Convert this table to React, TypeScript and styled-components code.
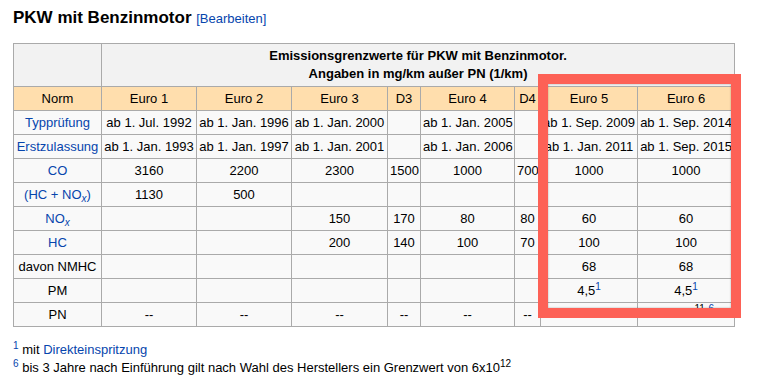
import React from 'react';
import styled, { createGlobalStyle } from 'styled-components';

const GlobalStyle = createGlobalStyle`
  html, body {
    margin: 0;
    padding: 0;
    background: #fff;
    font-family: "Liberation Sans", Arial, Helvetica, sans-serif;
    color: #000;
  }
`;

const Page = styled.div`
  position: relative;
  width: 763px;
  height: 380px;
  overflow: hidden;
  padding: 7px 0 0 13px;
  box-sizing: border-box;
`;

const Heading = styled.h2`
  margin: 0 0 14px;
  font-size: 17px;
  line-height: 21px;
  font-weight: bold;
`;

const EditLink = styled.span`
  font-size: 13px;
  font-weight: normal;
  color: #0645ad;
`;

const Table = styled.table`
  border-collapse: collapse;
  table-layout: fixed;
  width: 721px;
  font-size: 13px;
  border: 1px solid #aaa;
`;

const HeadCell = styled.th<{ $tone: 'grey' | 'peach'; $bold?: boolean }>`
  border: 1px solid #aaa;
  padding: 0 2px;
  text-align: center;
  white-space: nowrap;
  font-weight: ${(p) => (p.$bold ? 'bold' : 'normal')};
  background: ${(p) => (p.$tone === 'grey' ? '#f2f2f2' : '#ffdead')};
  line-height: 18px;
  height: 42px;
`;

const PeachCell = styled(HeadCell)`
  height: 23px;
  line-height: 16px;
`;

const Cell = styled.td<{ $link?: boolean }>`
  border: 1px solid #aaa;
  padding: 0 2px;
  height: 23px;
  line-height: 16px;
  text-align: center;
  white-space: nowrap;
  background: #f9f9f9;
  color: ${(p) => (p.$link ? '#0645ad' : '#000')};
`;

const Sub = styled.sub`
  font-size: 10px;
  font-style: italic;
  line-height: 0;
  vertical-align: -3px;
`;

const Sup = styled.sup<{ $link?: boolean }>`
  font-size: 10px;
  line-height: 0;
  vertical-align: 5px;
  color: ${(p) => (p.$link ? '#0645ad' : 'inherit')};
`;

const Raised = styled.span`
  vertical-align: 3px;
`;

const Notes = styled.div`
  margin-top: 14px;
  font-size: 13px;
  line-height: 18px;
`;

const Link = styled.span`
  color: #0645ad;
`;

const Highlight = styled.div`
  position: absolute;
  left: 538px;
  top: 74px;
  width: 203px;
  height: 244px;
  box-sizing: border-box;
  border: 10px solid #fd6156;
  box-shadow: inset 0 0 2px rgba(0, 0, 0, 0.35);
  pointer-events: none;
`;

const widths = [88, 95, 95, 96, 33, 94, 26, 97, 97];
const norms = ['Euro 1', 'Euro 2', 'Euro 3', 'D3', 'Euro 4', 'D4', 'Euro 5', 'Euro 6'];

type Row = { label: React.ReactNode; link?: boolean; values: React.ReactNode[] };

const pm = (
  <>
    4,5<Sup $link>1</Sup>
  </>
);

const rows: Row[] = [
  {
    label: 'Typprüfung',
    link: true,
    values: ['ab 1. Jul. 1992', 'ab 1. Jan. 1996', 'ab 1. Jan. 2000', '', 'ab 1. Jan. 2005', '', 'ab 1. Sep. 2009', 'ab 1. Sep. 2014'],
  },
  {
    label: 'Erstzulassung',
    link: true,
    values: ['ab 1. Jan. 1993', 'ab 1. Jan. 1997', 'ab 1. Jan. 2001', '', 'ab 1. Jan. 2006', '', 'ab 1. Jan. 2011', 'ab 1. Sep. 2015'],
  },
  { label: 'CO', link: true, values: ['3160', '2200', '2300', '1500', '1000', '700', '1000', '1000'] },
  {
    label: (
      <>
        (HC + NO<Sub>x</Sub>)
      </>
    ),
    link: true,
    values: ['1130', '500', '', '', '', '', '', ''],
  },
  {
    label: (
      <>
        NO<Sub>x</Sub>
      </>
    ),
    link: true,
    values: ['', '', '150', '170', '80', '80', '60', '60'],
  },
  { label: 'HC', link: true, values: ['', '', '200', '140', '100', '70', '100', '100'] },
  { label: 'davon NMHC', values: ['', '', '', '', '', '', '68', '68'] },
  { label: 'PM', values: ['', '', '', '', '', '', pm, pm] },
  {
    label: 'PN',
    values: [
      '--',
      '--',
      '--',
      '--',
      '--',
      '--',
      '--',
      <Raised>
        6 × 10<Sup>11</Sup> <Sup $link>6</Sup>
      </Raised>,
    ],
  },
];

const App: React.FC = () => {
  return (
    <>
      <GlobalStyle />
      <Page>
        <Heading>
          PKW mit Benzinmotor <EditLink>[Bearbeiten]</EditLink>
        </Heading>
        <Table>
          <colgroup>
            {widths.map((w, i) => (
              <col key={i} style={{ width: w }} />
            ))}
          </colgroup>
          <thead>
            <tr>
              <HeadCell $tone="grey" />
              <HeadCell $tone="grey" $bold colSpan={8}>
                Emissionsgrenzwerte für PKW mit Benzinmotor.
                <br />
                Angaben in mg/km außer PN (1/km)
              </HeadCell>
            </tr>
            <tr>
              <PeachCell $tone="peach">Norm</PeachCell>
              {norms.map((n) => (
                <PeachCell key={n} $tone="peach">
                  {n}
                </PeachCell>
              ))}
            </tr>
          </thead>
          <tbody>
            {rows.map((row, i) => (
              <tr key={i}>
                <Cell $link={row.link}>{row.label}</Cell>
                {row.values.map((v, j) => (
                  <Cell key={j}>{v}</Cell>
                ))}
              </tr>
            ))}
          </tbody>
        </Table>
        <Notes>
          <div>
            <Sup $link>1</Sup> mit <Link>Direkteinspritzung</Link>
          </div>
          <div>
            <Sup $link>6</Sup> bis 3 Jahre nach Einführung gilt nach Wahl des Herstellers ein Grenzwert von 6x10
            <Sup>12</Sup>
          </div>
        </Notes>
        <Highlight />
      </Page>
    </>
  );
};

export default App;
